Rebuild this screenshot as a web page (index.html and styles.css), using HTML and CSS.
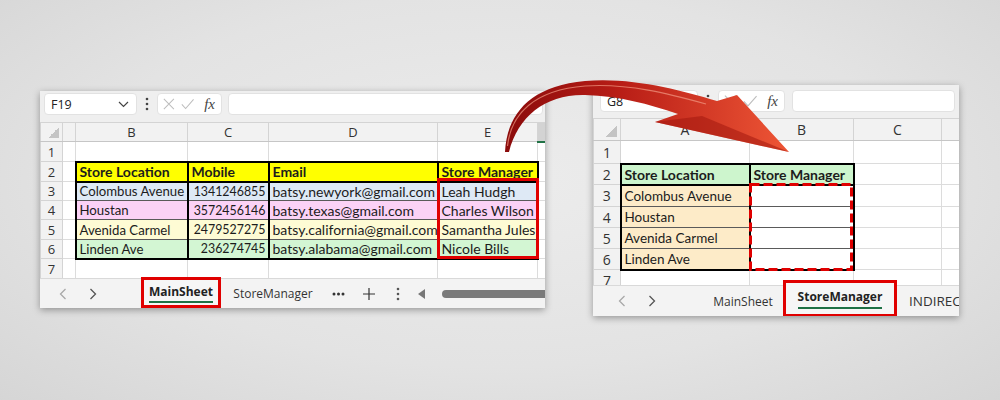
FILE: index.html
```html
<!DOCTYPE html>
<html>
<head>
<meta charset="utf-8">
<title>Sheets</title>
<link rel="stylesheet" href="styles.css">
</head>
<body>
<div class="desk">
  <div class="win win-left">
    <div class="fbar fbar-l">
      <div class="namebox"><span>F19</span>
        <svg class="chev" width="11" height="7" viewBox="0 0 11 7"><path d="M1 1 L5.5 5.5 L10 1" fill="none" stroke="#444" stroke-width="1.2"/></svg>
      </div>
      <div class="vd"><svg width="4" height="14" viewBox="0 0 4 14"><circle cx="2" cy="2" r="1.3" fill="#444"/><circle cx="2" cy="7" r="1.3" fill="#444"/><circle cx="2" cy="12" r="1.3" fill="#444"/></svg></div>
      <div class="fxbox">
        <svg width="14" height="14" viewBox="0 0 14 14"><path d="M1 1 L13 13 M13 1 L1 13" stroke="#bdbdbd" stroke-width="1.2" fill="none"/></svg>
        <svg width="16" height="14" viewBox="0 0 16 14"><path d="M1 7.5 L5.5 12.5 L15 1.5" stroke="#bdbdbd" stroke-width="1.2" fill="none"/></svg>
        <span class="fx">fx</span>
      </div>
      <div class="finput"></div>
    </div>
    <div class="grid grid-l">
      <table class="sheet sheet-l">
        <colgroup><col class="lw0"><col class="lw1"><col class="lw2"><col class="lw3"><col class="lw4"><col class="lw5"><col class="lw6"></colgroup>
        <tr class="lh"><th class="corner"></th><th></th><th>B</th><th>C</th><th>D</th><th>E</th><th class="csel"></th></tr>
        <tr class="l1"><td class="rn">1</td><td></td><td></td><td></td><td></td><td></td><td></td></tr>
        <tr class="l2"><td class="rn">2</td><td></td><td class="h hy">Store Location</td><td class="h hy">Mobile</td><td class="h hy">Email</td><td class="h hy">Store Manager</td><td></td></tr>
        <tr class="l3 bl"><td class="rn">3</td><td></td><td class="d loc">Colombus Avenue</td><td class="d num">1341246855</td><td class="d">batsy.newyork@gmail.com</td><td class="d">Leah Hudgh</td><td></td></tr>
        <tr class="l4 pk"><td class="rn">4</td><td></td><td class="d loc">Houstan</td><td class="d num">3572456146</td><td class="d">batsy.texas@gmail.com</td><td class="d">Charles Wilson</td><td></td></tr>
        <tr class="l5 ly"><td class="rn">5</td><td></td><td class="d loc">Avenida Carmel</td><td class="d num">2479527275</td><td class="d">batsy.california@gmail.com</td><td class="d">Samantha Jules</td><td></td></tr>
        <tr class="l6 lg last"><td class="rn">6</td><td></td><td class="d loc">Linden Ave</td><td class="d num">236274745</td><td class="d">batsy.alabama@gmail.com</td><td class="d">Nicole Bills</td><td></td></tr>
        <tr class="l7"><td class="rn">7</td><td></td><td></td><td></td><td></td><td></td><td></td></tr>
      </table>
      <div class="redbox"></div>
    </div>
    <div class="tabs tabs-l">
      <div class="nav"><svg width="8" height="12" viewBox="0 0 8 12"><path d="M6.5 1 L1.5 6 L6.5 11" fill="none" stroke="#a8a8a8" stroke-width="1.3"/></svg></div>
      <div class="nav"><svg width="8" height="12" viewBox="0 0 8 12"><path d="M1.5 1 L6.5 6 L1.5 11" fill="none" stroke="#555" stroke-width="1.3"/></svg></div>
      <div class="tab active act-l"><span class="ul">MainSheet</span></div>
      <div class="tab tab2-l">StoreManager</div>
      <div class="ico ico-more"><svg width="13" height="4" viewBox="0 0 13 4"><circle cx="2" cy="2" r="1.5" fill="#333"/><circle cx="6.5" cy="2" r="1.5" fill="#333"/><circle cx="11" cy="2" r="1.5" fill="#333"/></svg></div>
      <div class="ico ico-plus"><svg width="12" height="12" viewBox="0 0 12 12"><path d="M6 0 V12 M0 6 H12" stroke="#333" stroke-width="1.2"/></svg></div>
      <div class="ico ico-vd"><svg width="4" height="14" viewBox="0 0 4 14"><circle cx="2" cy="2" r="1.3" fill="#555"/><circle cx="2" cy="7" r="1.3" fill="#555"/><circle cx="2" cy="12" r="1.3" fill="#555"/></svg></div>
      <div class="ico ico-tri"><svg width="7" height="10" viewBox="0 0 7 10"><path d="M7 0 V10 L0 5 Z" fill="#777"/></svg></div>
      <div class="thumb"></div>
    </div>
  </div>

  <div class="win win-right">
    <div class="fbar fbar-r">
      <div class="namebox"><span>G8</span></div>
      <div class="vd"><svg width="4" height="14" viewBox="0 0 4 14"><circle cx="2" cy="2" r="1.3" fill="#444"/><circle cx="2" cy="7" r="1.3" fill="#444"/><circle cx="2" cy="12" r="1.3" fill="#444"/></svg></div>
      <div class="fxbox">
        <svg width="14" height="14" viewBox="0 0 14 14"><path d="M1 1 L13 13 M13 1 L1 13" stroke="#bdbdbd" stroke-width="1.2" fill="none"/></svg>
        <svg width="16" height="14" viewBox="0 0 16 14"><path d="M1 7.5 L5.5 12.5 L15 1.5" stroke="#bdbdbd" stroke-width="1.2" fill="none"/></svg>
        <span class="fx">fx</span>
      </div>
      <div class="finput"></div>
    </div>
    <div class="grid grid-r">
      <table class="sheet sheet-r">
        <colgroup><col class="rw0"><col class="rw1"><col class="rw2"><col class="rw3"><col class="rw4"></colgroup>
        <tr class="rh"><th class="corner"></th><th>A</th><th>B</th><th>C</th><th></th></tr>
        <tr class="r1"><td class="rn">1</td><td></td><td></td><td></td><td></td></tr>
        <tr class="r2"><td class="rn">2</td><td class="h hg">Store Location</td><td class="h hg">Store Manager</td><td></td><td></td></tr>
        <tr class="r3"><td class="rn">3</td><td class="d pe">Colombus Avenue</td><td class="d"></td><td></td><td></td></tr>
        <tr class="r4"><td class="rn">4</td><td class="d pe">Houstan</td><td class="d"></td><td></td><td></td></tr>
        <tr class="r5"><td class="rn">5</td><td class="d pe">Avenida Carmel</td><td class="d"></td><td></td><td></td></tr>
        <tr class="r6 last"><td class="rn">6</td><td class="d pe">Linden Ave</td><td class="d"></td><td></td><td></td></tr>
        <tr class="r7"><td class="rn">7</td><td></td><td></td><td></td><td></td></tr>
      </table>
      <svg class="ants" width="104" height="88" viewBox="0 0 104 88"><rect x="1.5" y="1.5" width="101" height="85" fill="none" stroke="#e00000" stroke-width="3" stroke-dasharray="9 4"/></svg>
    </div>
    <div class="tabs tabs-r">
      <div class="nav"><svg width="8" height="12" viewBox="0 0 8 12"><path d="M6.5 1 L1.5 6 L6.5 11" fill="none" stroke="#a8a8a8" stroke-width="1.3"/></svg></div>
      <div class="nav"><svg width="8" height="12" viewBox="0 0 8 12"><path d="M1.5 1 L6.5 6 L1.5 11" fill="none" stroke="#555" stroke-width="1.3"/></svg></div>
      <div class="tab tab1-r">MainSheet</div>
      <div class="tab active act-r"><span class="ul">StoreManager</span></div>
      <div class="tab tab3-r">INDIRECT</div>
    </div>
  </div>
</div>

<svg class="arrow" width="1000" height="400" viewBox="0 0 1000 400">
  <defs>
    <linearGradient id="ag" x1="505" y1="0" x2="790" y2="0" gradientUnits="userSpaceOnUse">
      <stop offset="0" stop-color="#8a0b0b"/>
      <stop offset="0.4" stop-color="#b81d16"/>
      <stop offset="1" stop-color="#ee5636"/>
    </linearGradient>
  </defs>
  <path fill="url(#ag)" d="M505 152 C507 114 530 86 585 81 C632 77 680 90 717 101 L737 95 L789 152 L655 122 L678 114 C648 104 620 96 585 95 C546 94 518 116 509 152 Z"/>
  <path fill="none" stroke="#f29a84" stroke-width="1.2" opacity="0.7" d="M507.5 146 C511 114 534 90 585 86 C628 83 670 94 706 104"/>
  <path fill="#a3170f" opacity="0.55" d="M655 122 L789 152 L702 116 Z"/>
</svg>
</body>
</html>
```
FILE: styles.css
```css
* { box-sizing: border-box; }
html, body { margin: 0; padding: 0; }
body {
  width: 1000px;
  height: 400px;
  overflow: hidden;
  position: relative;
  background: radial-gradient(ellipse 75% 85% at 50% 45%, #ececec 0%, #e3e3e3 55%, #d3d3d3 100%);
  font-family: Lato, "Liberation Sans", sans-serif;
}
.desk { display: flex; align-items: flex-start; padding-left: 40px; }
.win {
  background: #fff;
  box-shadow: 0 2px 7px rgba(0,0,0,0.35);
  overflow: hidden;
  display: flex;
  flex-direction: column;
  flex-shrink: 0;
}
.win-left { width: 505px; margin-top: 91px; }
.win-right { width: 366px; margin-top: 85px; margin-left: 48px; }

/* formula bar */
.fbar { display: flex; align-items: flex-start; background: #efefef; }
.fbar-l { height: 31px; padding: 2px 2px 0 4px; }
.fbar-r { height: 33px; padding: 5px 4px 0 7px; }
.namebox {
  background: #fff;
  border: 1px solid #e2e2e2;
  border-radius: 4px;
  height: 22px;
  display: flex;
  align-items: center;
  justify-content: space-between;
  padding: 0 7px 0 6px;
  font-family: "Open Sans", sans-serif;
  font-size: 12.5px;
  color: #222;
  flex-shrink: 0;
}
.fbar-l .namebox { width: 93px; }
.fbar-r .namebox { width: 98px; }
.vd { width: 20px; height: 22px; display: flex; align-items: center; justify-content: center; flex-shrink: 0; }
.fxbox {
  background: #fff;
  border: 1px solid #e2e2e2;
  border-radius: 4px;
  height: 22px;
  display: flex;
  align-items: center;
  gap: 6px;
  padding: 0 6px 0 5px;
  flex-shrink: 0;
}
.fbar-l .fxbox { width: 65px; }
.fbar-r .fxbox { width: 67px; }
.fx { font-family: "Liberation Serif", serif; font-style: italic; font-size: 15px; color: #444; margin-left: 4px; }
.finput {
  flex: 1;
  height: 22px;
  background: #fff;
  border: 1px solid #e2e2e2;
  border-radius: 4px;
  margin-left: 6px;
}
.fbar-r .finput { margin-left: 7px; }

/* grid */
.grid { position: relative; overflow: hidden; }
.grid-l { height: 156px; }
.grid-r { height: 167px; }
.sheet { border-collapse: collapse; table-layout: fixed; }
.sheet-l { width: 505px; }
.sheet-r { width: 366px; }
.lw0 { width: 22px; } .lw1 { width: 13px; } .lw2 { width: 112px; } .lw3 { width: 81px; }
.lw4 { width: 169px; } .lw5 { width: 100px; } .lw6 { width: 8px; }
.rw0 { width: 27px; } .rw1 { width: 129px; } .rw2 { width: 104px; } .rw3 { width: 88px; } .rw4 { width: 18px; }

.sheet td, .sheet th {
  padding: 0 3px;
  border: 1px solid #dcdcdc;
  white-space: nowrap;
  overflow: hidden;
  font-size: 14px;
  font-weight: normal;
  color: #1c1c1c;
  text-align: left;
  vertical-align: middle;
}
.sheet th {
  background: #f2f2f2;
  text-align: center;
  font-family: "Open Sans", sans-serif;
  font-size: 13px;
  color: #333;
  border-color: #d4d4d4;
  border-bottom: 1px solid #c6c6c6;
}
.sheet th.corner {
  background: #f2f2f2 linear-gradient(to bottom right, transparent 50%, #c4c4c4 50%) no-repeat right 3px bottom 3px / 11px 11px;
}
.sheet th.csel { background: #d3d3d3; border-bottom: 2px solid #217346; }
.sheet td.rn {
  background: #f2f2f2;
  text-align: center;
  padding: 0;
  font-family: "Open Sans", sans-serif;
  font-size: 13px;
  color: #333;
  border-color: #d4d4d4;
}
.sheet td.h { font-weight: 700; border: 2px solid #000; }
.sheet td.d {
  border-left: 2px solid #000;
  border-right: 2px solid #000;
  border-top: 1px solid #5a5a5a;
  border-bottom: 1px solid #5a5a5a;
}
.sheet tr.last td.d { border-bottom: 2px solid #000; }
.sheet td.loc { font-size: 13.2px; padding-left: 3px; padding-right: 1px; }
.sheet td.num { text-align: right; font-size: 12.4px; padding-right: 2px; padding-left: 1px; }
.hy { background: #ffff00; }
.hg { background: #cdf5cd; }
.bl td.d { background: #dee9f5; }
.pk td.d { background: #fbd2f6; }
.ly td.d { background: #fefbd4; }
.lg td.d { background: #d3f6d3; }
.sheet td.pe { background: #fdebc8; }

.lh { height: 19px; } .l1 { height: 20px; } .l2 { height: 20px; } .l3 { height: 19px; }
.l4 { height: 19px; } .l5 { height: 20px; } .l6 { height: 19px; } .l7 { height: 20px; }
.rh { height: 22px; } .r1 { height: 23px; } .r2 { height: 21px; } .r3 { height: 22px; }
.r4 { height: 21px; } .r5 { height: 21px; } .r6 { height: 21px; } .r7 { height: 21px; }
.sheet-r th { font-size: 14px; }
.sheet-r td { font-size: 13.5px; }
.sheet-r td.h { font-size: 14px; }
.sheet-r td.rn { font-size: 14px; }

.redbox {
  position: absolute;
  left: 397px;
  top: 56px;
  width: 102px;
  height: 81px;
  border: 3px solid #e00000;
}
.ants { position: absolute; left: 156px; top: 65px; }

/* tabs */
.tabs {
  position: relative;
  z-index: 1;
  display: flex;
  align-items: center;
  background: #f3f3f3;
  border-top: 1px solid #d9d9d9;
  font-family: "Open Sans", sans-serif;
  font-size: 12px;
  color: #333;
}
.tabs > * { flex-shrink: 0; }
.tabs-l { height: 30px; padding-left: 8px; }
.tabs-r { height: 31px; padding-left: 14px; }
.nav { width: 30px; display: flex; justify-content: center; }
.tab { text-align: center; white-space: nowrap; }
.active {
  border: 3px solid #e00000;
  font-weight: 700;
  display: flex;
  align-items: center;
  justify-content: center;
  align-self: flex-start;
  background: #f6f6f6;
  color: #222;
}
.ul { border-bottom: 2px solid #1e7145; padding-bottom: 1px; }
.act-l { width: 80px; height: 31px; margin-top: -2px; margin-left: 33px; }
.tab2-l { width: 104px; }
.ico { display: flex; justify-content: center; align-items: center; height: 20px; }
.ico-more { width: 26px; }
.ico-plus { width: 36px; }
.ico-vd { width: 22px; }
.ico-tri { width: 24px; }
.tabs-l .thumb { flex: 1 0 auto; height: 8px; border-radius: 4px; background: #7a7a7a; margin-left: 9px; margin-right: -10px; }

.tab1-r { width: 80px; margin-left: 36px; }
.act-r { width: 114px; height: 37px; margin-top: -6px; }
.act-r .ul { padding-bottom: 2px; }
.tab3-r { margin-left: 12px; font-size: 13.5px; }

.arrow { position: absolute; left: 0; top: 0; pointer-events: none; }
```
